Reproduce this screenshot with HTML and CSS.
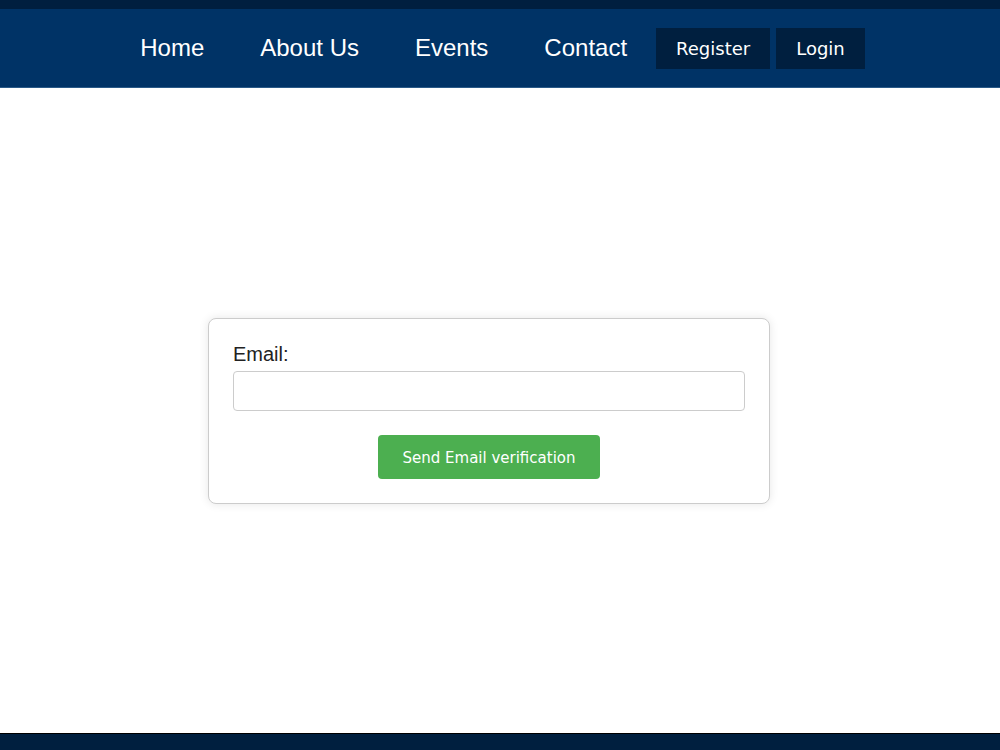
FILE: index.html
```html
<!DOCTYPE html>
<html lang="en">

<head>
  <meta charset="UTF-8">
  <meta name="viewport" content="width=device-width, initial-scale=1.0">
  <title>Email verification</title>
  <link rel="stylesheet" href="styles.css">
</head>

<body>
  <header class="site-header">
    <nav class="nav-bar">
      <a href="#" class="nav-link">Home</a>
      <a href="#" class="nav-link">About Us</a>
      <a href="#" class="nav-link">Events</a>
      <a href="#" class="nav-link">Contact</a>
      <a href="#" class="nav-btn">Register</a>
      <a href="#" class="nav-btn">Login</a>
    </nav>
  </header>

  <main class="content">
    <form class="verify-box">
      <label for="email" class="verify-label">Email:</label>
      <input type="email" id="email" class="verify-input">
      <div class="verify-actions">
        <button type="button" class="verify-btn">Send Email verification</button>
      </div>
    </form>
  </main>

  <footer class="site-footer"></footer>
</body>

</html>
```

FILE: styles.css
```css
* {
  margin: 0px;
  padding: 0px;
  box-sizing: border-box;
}

body {
  min-height: 100vh;
  display: flex;
  flex-direction: column;
  font-family: "Liberation Sans", Arial, sans-serif;
  background: #fff;
}

.site-header {
  height: 88px;
  background: #003366;
  border-top: 9px solid #001f3f;
  border-bottom: 1px solid #2a5a88;
}

.nav-bar {
  height: 100%;
  display: flex;
  align-items: center;
  justify-content: center;
  padding-right: 23px;
}

.nav-link {
  color: #fff;
  text-decoration: none;
  font-size: 24px;
  padding: 10px 28px;
}

.nav-btn {
  color: #fff;
  text-decoration: none;
  font-family: "DejaVu Sans", Verdana, sans-serif;
  font-size: 18px;
  background: #001f3f;
  height: 41px;
  display: flex;
  align-items: center;
  padding: 0 20px;
  margin-left: 1px;
}

.nav-btn + .nav-btn {
  margin-left: 6px;
}

.content {
  flex: 1;
  display: flex;
  align-items: center;
  justify-content: center;
  padding-right: 22px;
}

.verify-box {
  width: 562px;
  padding: 24px;
  border: 1px solid #ccc;
  border-radius: 8px;
  box-shadow: 0 0 10px rgba(0, 0, 0, 0.1);
  background: #fff;
}

.verify-label {
  display: block;
  font-size: 20px;
  line-height: 23px;
  color: #222;
  margin-bottom: 5px;
}

.verify-input {
  display: block;
  width: 100%;
  height: 40px;
  border: 1px solid #ccc;
  border-radius: 4px;
  padding: 8px;
  font-size: 16px;
}

.verify-actions {
  display: flex;
  justify-content: center;
  margin-top: 24px;
}

.verify-btn {
  width: 222px;
  height: 44px;
  border: none;
  border-radius: 4px;
  background: #4caf50;
  color: #fff;
  font-family: "DejaVu Sans", Verdana, sans-serif;
  font-size: 15px;
  padding-top: 2px;
  cursor: pointer;
}

.site-footer {
  height: 17px;
  background: #001f3f;
  border-top: 1px solid #000;
}
```
